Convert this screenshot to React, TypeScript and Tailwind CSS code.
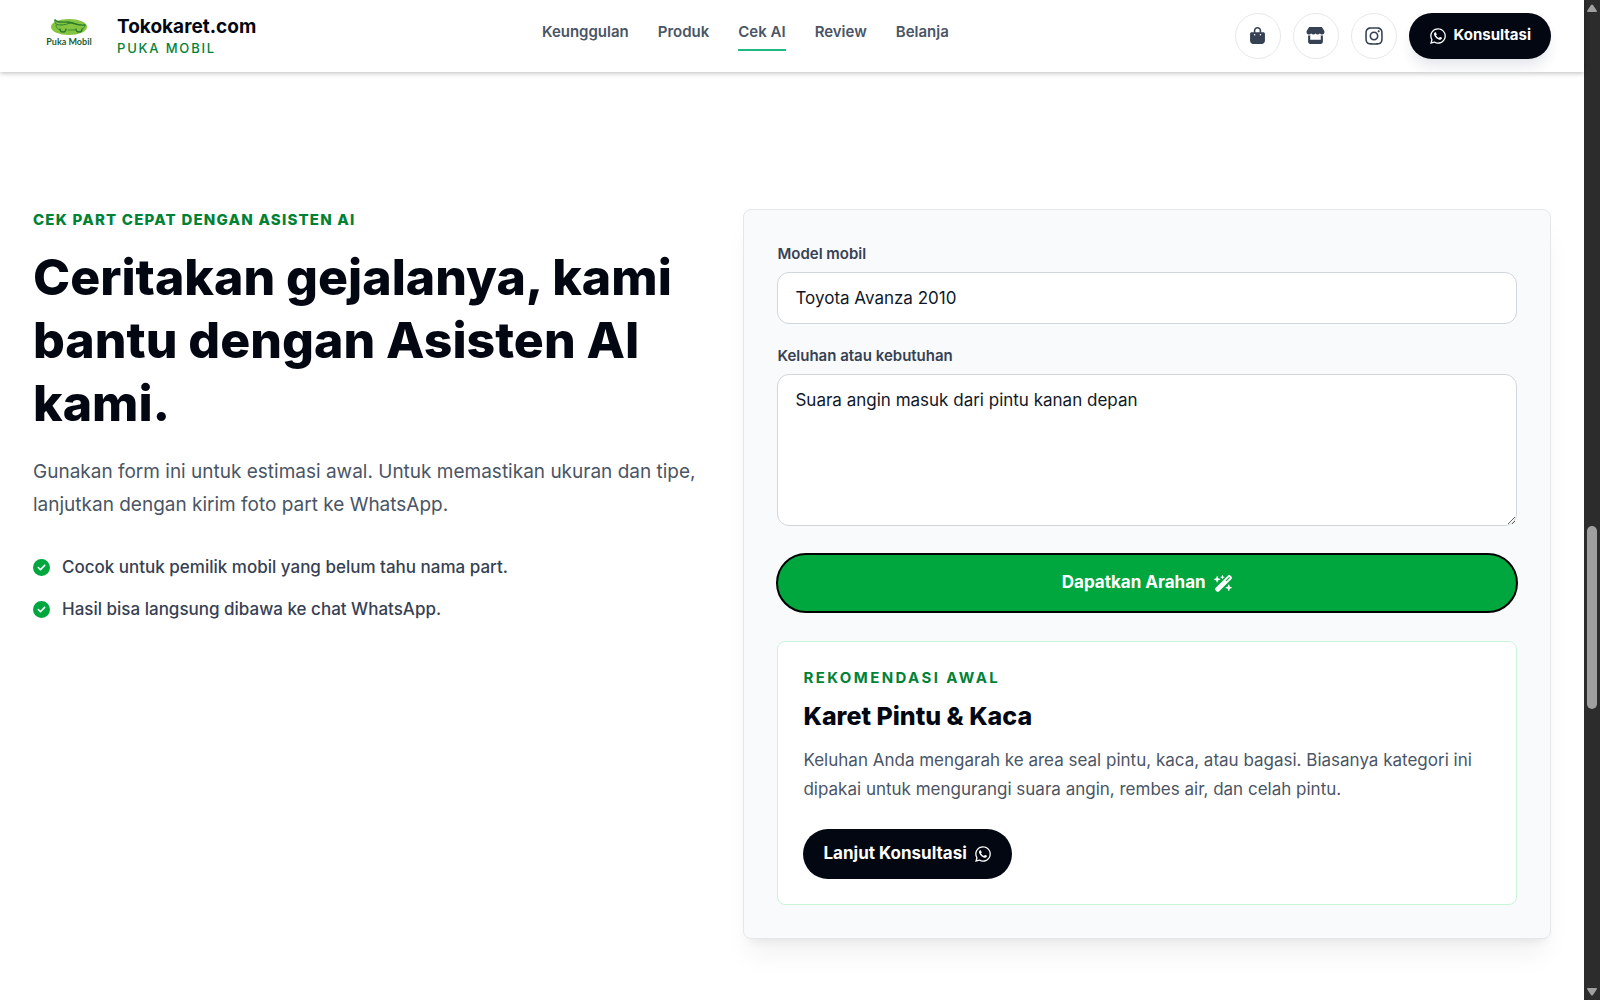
import { useState } from "react";
import {
  FaBagShopping,
  FaCircleCheck,
  FaInstagram,
  FaStore,
  FaWandMagicSparkles,
  FaWhatsapp,
} from "react-icons/fa6";

const navItems = ["Keunggulan", "Produk", "Cek AI", "Review", "Belanja"];

const socials = [
  { label: "Shopee", icon: <FaBagShopping className="text-[17px]" /> },
  { label: "Tokopedia", icon: <FaStore className="text-[19px]" /> },
  { label: "Instagram", icon: <FaInstagram className="text-[20px]" /> },
];

const points = [
  "Cocok untuk pemilik mobil yang belum tahu nama part.",
  "Hasil bisa langsung dibawa ke chat WhatsApp.",
];

const Logo = () => (
  <svg viewBox="0 0 72 46" className="w-[72px]" role="img" aria-label="Puka Mobil">
    <ellipse cx="36" cy="14" rx="18" ry="8" fill="#85c440" />
    <g fill="none" stroke="#2a7d2c" strokeLinecap="round">
      <path d="M22 7c2 3 7 2 13 2 6 1 10 4 17 3" strokeWidth="1.4" />
      <path d="M22 7c-1 4 2 5 6 5 7 0 9-4 15-1" strokeWidth="1" />
      <path d="M23 12c0 3 2 4 4 5M35 17h7M49 16c2-1 3-2 3-4" strokeWidth="0.8" />
      <path d="M27 16a3 3 0 0 0 6 0M43 16a3 3 0 0 0 6 0" strokeWidth="1.3" />
    </g>
    <text
      x="36"
      y="32"
      textAnchor="middle"
      fontSize="9"
      fontWeight="700"
      fill="#1d5c33"
      fontFamily="Lato, sans-serif"
    >
      Puka Mobil
    </text>
  </svg>
);

const Header = () => (
  <header className="relative z-10 flex h-[72px] items-center justify-between bg-white px-[33px] pb-px shadow-[0_1px_5px_rgba(0,0,0,0.28)]">
    <a href="#" className="flex items-center gap-3">
      <Logo />
      <span className="flex flex-col">
        <span className="text-[19px] leading-[24px] font-bold text-gray-950">Tokokaret.com</span>
        <span className="text-[13px] leading-[18px] font-medium tracking-[0.14em] text-green-700">
          PUKA MOBIL
        </span>
      </span>
    </a>

    <nav className="flex gap-[29px]">
      {navItems.map((item) => (
        <a
          key={item}
          href="#"
          className={`border-b-2 pb-[7px] text-[15px] leading-[21px] font-semibold text-gray-600 ${
            item === "Cek AI" ? "border-[#1fb981]" : "border-transparent"
          }`}
        >
          {item}
        </a>
      ))}
    </nav>

    <div className="flex items-center justify-end gap-3">
      {socials.map((s) => (
        <a
          key={s.label}
          href="#"
          aria-label={s.label}
          className="flex size-[46px] items-center justify-center rounded-full border border-gray-200 text-gray-700"
        >
          {s.icon}
        </a>
      ))}
      <a
        href="#"
        className="flex h-[46px] items-center gap-[7px] rounded-full bg-gray-950 px-5 text-[15px] font-bold text-white shadow-lg shadow-gray-200"
      >
        <FaWhatsapp className="text-[18px]" />
        Konsultasi
      </a>
    </div>
  </header>
);

const CheckForm = () => {
  const [model, setModel] = useState("Toyota Avanza 2010");
  const [complaint, setComplaint] = useState("Suara angin masuk dari pintu kanan depan");

  return (
    <div className="rounded-lg border border-gray-200 bg-[#f9fafc] p-[33px] shadow-[0_21px_26px_-5px_rgba(0,0,0,0.05),0_8px_10px_-6px_rgba(0,0,0,0.07)]">
      <form onSubmit={(e) => e.preventDefault()}>
        <label htmlFor="model" className="block text-[15px] leading-[21px] font-semibold text-gray-700">
          Model mobil
        </label>
        <input
          id="model"
          value={model}
          onChange={(e) => setModel(e.target.value)}
          className="mt-2 block h-[52px] w-full rounded-xl border border-gray-300 bg-white px-[17px] text-[17px] text-gray-900"
        />
        <label
          htmlFor="complaint"
          className="mt-[21px] block text-[15px] leading-[21px] font-semibold text-gray-700"
        >
          Keluhan atau kebutuhan
        </label>
        <textarea
          id="complaint"
          value={complaint}
          onChange={(e) => setComplaint(e.target.value)}
          className="mt-2 block h-[152px] w-full resize-y rounded-xl border border-gray-300 bg-white px-[17px] py-3 text-[17px] leading-[26px] text-gray-900"
        />
        <button
          type="submit"
          className="mt-7 flex h-[58px] w-full items-center justify-center gap-2 rounded-full bg-[#00a63e] text-[17px] font-bold text-white outline-2 -outline-offset-1 outline-black"
        >
          Dapatkan Arahan
          <FaWandMagicSparkles className="text-[19px]" />
        </button>
      </form>

      <div className="mt-[29px] rounded-lg border border-[#c9f5d9] bg-white p-[25px]">
        <p className="text-[15px] leading-[21px] font-bold tracking-[0.16em] text-green-700">
          REKOMENDASI AWAL
        </p>
        <h3 className="mt-[11px] text-[25px] leading-[34px] font-extrabold text-gray-950">
          Karet Pintu &amp; Kaca
        </h3>
        <p className="mt-[13px] text-[17px] leading-[29px] text-gray-600">
          Keluhan Anda mengarah ke area seal pintu, kaca, atau bagasi. Biasanya kategori ini dipakai untuk
          mengurangi suara angin, rembes air, dan celah pintu.
        </p>
        <a
          href="#"
          className="mt-[25px] inline-flex h-[50px] items-center gap-[7px] rounded-full bg-gray-950 px-5 text-[17px] font-bold text-white"
        >
          Lanjut Konsultasi
          <FaWhatsapp className="text-[18px]" />
        </a>
      </div>
    </div>
  );
};

const Scrollbar = () => (
  <div className="flex w-4 shrink-0 flex-col items-center justify-between bg-[#2c2c2c] py-1">
    <svg viewBox="0 0 10 8" className="w-[10px]" fill="#9f9f9f">
      <path d="M4 1Q5 0 6 1L10 7Q10 8 9 8H1Q0 8 0 7Z" />
    </svg>
    <div className="mt-[235px] h-[183px] w-[10px] rounded-full bg-[#9f9f9f]" />
    <svg viewBox="0 0 10 8" className="w-[10px]" fill="#9f9f9f">
      <path d="M4 7Q5 8 6 7L10 1Q10 0 9 0H1Q0 0 0 1Z" />
    </svg>
  </div>
);

export default function App() {
  return (
    <div className="flex h-screen overflow-hidden bg-white font-[Inter,sans-serif]">
      <div className="min-w-0 flex-1">
        <Header />
        <main className="grid grid-cols-[0.9fr_1.084fr] gap-10 px-[33px] pt-[137px]">
          <div>
            <p className="text-[15px] leading-[21px] font-extrabold tracking-[0.08em] text-green-700">
              CEK PART CEPAT DENGAN ASISTEN AI
            </p>
            <h2 className="mt-4 text-[50px] leading-[63px] font-extrabold text-gray-950">
              Ceritakan gejalanya, kami bantu dengan Asisten AI kami.
            </h2>
            <p className="mt-5 text-[19px] leading-[33px] text-gray-600">
              Gunakan form ini untuk estimasi awal. Untuk memastikan ukuran dan tipe, lanjutkan dengan kirim
              foto part ke WhatsApp.
            </p>
            <ul className="mt-[33px] flex flex-col gap-4">
              {points.map((point) => (
                <li
                  key={point}
                  className="flex items-center gap-3 text-[17px] leading-[26px] font-medium text-gray-700"
                >
                  <FaCircleCheck className="text-[#00a63e]" />
                  {point}
                </li>
              ))}
            </ul>
          </div>
          <CheckForm />
        </main>
      </div>
      <Scrollbar />
    </div>
  );
}
